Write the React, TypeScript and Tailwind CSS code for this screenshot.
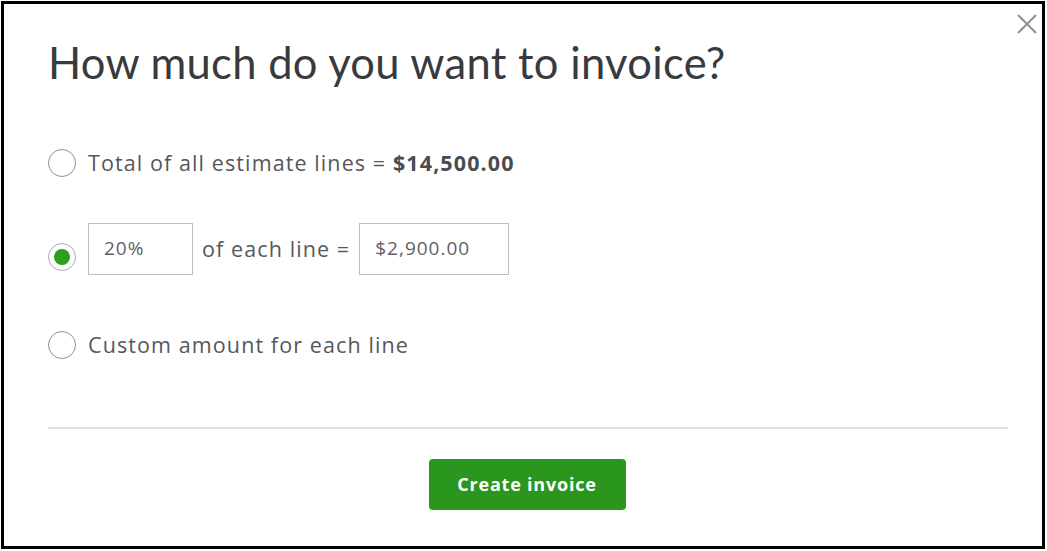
import React from "react";

function Radio({ checked }: { checked?: boolean }) {
  return (
    <span
      className={
        checked
          ? "flex h-[28px] w-[28px] shrink-0 items-center justify-center rounded-full border-[1.5px] border-[#a9acb1] bg-white"
          : "flex h-[28px] w-[28px] shrink-0 items-center justify-center rounded-full border-[1.5px] border-[#8d9096] bg-white"
      }
    >
      {checked ? <span className="h-[16px] w-[16px] rounded-full bg-[#2ca01c]" /> : null}
    </span>
  );
}

export default function App() {
  return (
    <div
      className="h-[551px] w-[1047px] bg-white pl-[1px] pt-[1px]"
      style={{ fontFamily: "'Open Sans', Lato, sans-serif" }}
    >
      <div className="relative flex h-[548px] w-[1044px] flex-col border-[3px] border-black bg-white pl-[44px] pr-[34px]">
        <button className="absolute right-[3px] top-[8px] text-[#8d9096]" aria-label="Close">
          <svg width="24" height="24" viewBox="0 0 24 24" fill="none" stroke="currentColor" strokeWidth="2">
            <path d="M3 3 L21 21 M21 3 L3 21" />
          </svg>
        </button>
        <h1
          className="mt-[32px] text-[43.5px] leading-[52px] tracking-[0.3px] text-[#393a3d]"
          style={{ fontFamily: "Lato, 'Open Sans', sans-serif" }}
        >
          How much do you want to invoice?
        </h1>
        <div className="mt-[60px] flex items-center gap-[12px] text-[21.5px] leading-[30px] tracking-[1.1px] text-[#55575b]">
          <Radio />
          <span>
            Total of all estimate lines = <span className="font-bold text-[#4a4b4f]">$14,500.00</span>
          </span>
        </div>
        <div className="mt-[45px] flex items-center text-[21.5px] leading-[30px] tracking-[1.1px] text-[#55575b]">
          <span className="mt-[16px]">
            <Radio checked />
          </span>
          <div className="ml-[12px] flex h-[52px] w-[105px] items-center border border-[#babec5] px-[15px] pb-[3px] text-[19px] tracking-[1px] text-[#5f6165]">
            20%
          </div>
          <span className="ml-[9px] mr-[9px]">of each line =</span>
          <div className="flex h-[52px] w-[150px] items-center border border-[#babec5] px-[15px] pb-[3px] text-[19px] tracking-[1px] text-[#5f6165]">
            $2,900.00
          </div>
        </div>
        <div className="mt-[55px] flex items-center gap-[12px] text-[21.5px] leading-[30px] tracking-[1.1px] text-[#55575b]">
          <Radio />
          <span>Custom amount for each line</span>
        </div>
        <div className="mt-[67px] h-[2px] w-full bg-[#dcdfe4]" />
        <div className="mt-[30px] flex justify-center pr-[2px]">
          <button className="h-[51px] w-[197px] rounded-[4px] bg-[#2a961d] text-[18px] font-bold tracking-[0.8px] text-white">
            Create invoice
          </button>
        </div>
      </div>
    </div>
  );
}
